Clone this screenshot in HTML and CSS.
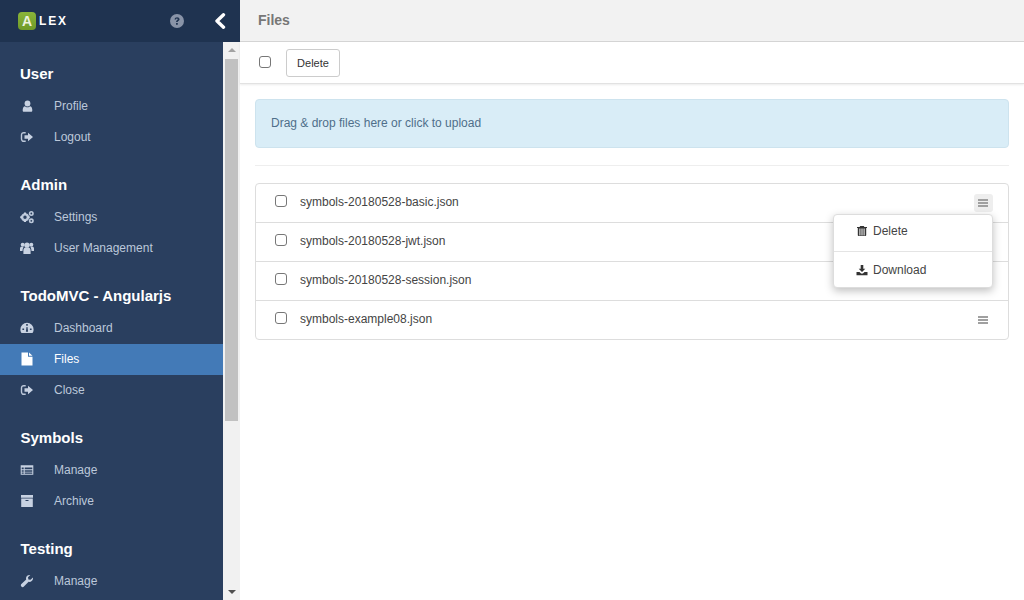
FILE: index.html
```html
<!DOCTYPE html>
<html lang="en">
<head>
<meta charset="utf-8">
<title>ALEX - Files</title>
<link rel="stylesheet" href="styles.css">
</head>
<body>
<div class="app">
  <aside class="sidebar">
    <header class="brand">
      <div class="logo"><span class="logo-a">A</span><span class="logo-rest">LEX</span></div>
      <svg class="help" viewBox="0 0 16 16"><circle cx="8" cy="8" r="8" fill="currentColor"/><path d="M5.200 6.200c.2-1.600 1.400-2.500 2.900-2.500 1.600 0 2.800 1 2.800 2.300 0 1.100-.7 1.600-1.400 2.100-.5.300-.7.600-.7 1.100H6.900c0-1 .3-1.600 1-2.100.6-.4.900-.6.900-1.100 0-.5-.4-.8-.9-.8-.6 0-1 .4-1.100 1zM6.900 10.200h2V12.300h-2z" fill="#1f3350"/></svg>
      <svg class="collapse" viewBox="0 0 12 16"><path d="M9.500 1.800 3 8l6.500 6.200" fill="none" stroke="currentColor" stroke-width="3.400" stroke-linecap="round" stroke-linejoin="round"/></svg>
    </header>
    <div class="side-body">
      <nav class="menu">
        <h2 class="menu-title">User</h2>
        <a class="menu-item"><svg class="ico" viewBox="0 0 14 14"><circle cx="7.500" cy="4.500" r="2.900"/><path d="M4 12.800c-.9 0-1.300-.5-1.300-1.300 0-2 .5-4.200 2.100-4.300.6.500 1.500 1 2.700 1s2.100-.5 2.700-1c1.600.1 2.100 2.300 2.100 4.300 0 .8-.4 1.300-1.300 1.300z"/></svg>Profile</a>
        <a class="menu-item"><svg class="ico" viewBox="0 0 14 14"><path d="M5.700 2.700H3.700A2.200 2.200 0 0 0 1.500 4.900v4.200a2.200 2.200 0 0 0 2.200 2.200h2" fill="none" stroke="currentColor" stroke-width="1.400"/><path d="M8 2.800 13 7l-5 4.200V8.800H4.500V5.200H8z"/></svg>Logout</a>

        <h2 class="menu-title">Admin</h2>
        <a class="menu-item"><svg class="ico" viewBox="0 0 14 14"><circle cx="5" cy="7.300" r="2.900" fill="none" stroke="currentColor" stroke-width="2.400"/><path d="M4 2.500h2v2H4zM4 10.100h2v2H4zM.2 6.300h2v2h-2zM7.800 6.300h2v2h-2z"/><circle cx="11.300" cy="3.500" r="1.700" fill="none" stroke="currentColor" stroke-width="1.600"/><circle cx="11.300" cy="10.800" r="1.700" fill="none" stroke="currentColor" stroke-width="1.600"/></svg>Settings</a>
        <a class="menu-item"><svg class="ico" viewBox="0 0 14 14"><circle cx="7" cy="4.200" r="2.600"/><circle cx="2.700" cy="3.700" r="2"/><circle cx="11.300" cy="3.700" r="2"/><path d="M3.400 13V9.200c0-1.800 1.200-2.800 2-2.800h3.200c.8 0 2 1 2 2.800V13zM0 10V7.400c0-1 .8-1.600 1.300-1.600h2.100c.4.500-.9 1.700-.9 4.200zM14 10V7.400c0-1-.8-1.600-1.300-1.600h-2.100c-.4.500.9 1.700.9 4.200z"/></svg>User Management</a>

        <h2 class="menu-title">TodoMVC - Angularjs</h2>
        <a class="menu-item"><svg class="ico" viewBox="0 0 14 14"><path fill-rule="evenodd" d="M7 1.800a6.600 6.600 0 0 0-6.600 6.600c0 1.500.4 2.600 1.100 3.600h11c.7-1 1.100-2.100 1.100-3.600A6.600 6.600 0 0 0 7 1.800zM6.200 3h1.600v1.700H6.200zM2.400 7.500h1.700v1.600H2.400zM9.900 7.500h1.700v1.600H9.900zM5.900 10.800l.6-4.700h1l.6 4.700z"/></svg>Dashboard</a>
        <a class="menu-item active"><svg class="ico" viewBox="0 0 14 14"><path d="M1.500.5H8v4.300h4.500v8.700h-11zM9 .5l3.500 3.300H9z"/></svg>Files</a>
        <a class="menu-item"><svg class="ico" viewBox="0 0 14 14"><path d="M5.700 2.700H3.700A2.200 2.200 0 0 0 1.500 4.900v4.200a2.200 2.200 0 0 0 2.200 2.200h2" fill="none" stroke="currentColor" stroke-width="1.400"/><path d="M8 2.800 13 7l-5 4.200V8.800H4.500V5.200H8z"/></svg>Close</a>

        <h2 class="menu-title">Symbols</h2>
        <a class="menu-item"><svg class="ico" viewBox="0 0 14 14"><path fill-rule="evenodd" d="M.7 2.300h12.600v9.400H.7zM1.700 4.500v1.700h2V4.500zM4.700 4.500v1.700h7.600V4.500zM1.700 7.200v1.600h2V7.200zM4.700 7.200v1.600h7.600V7.200zM1.700 9.500v1.200h2V9.500zM4.700 9.500v1.200h7.600V9.500z"/></svg>Manage</a>
        <a class="menu-item"><svg class="ico" viewBox="0 0 14 14"><path fill-rule="evenodd" d="M1 1h12v2.700H1zM1.200 4.500H12.800v8.500H1.200zM5.500 6v1h3V6z"/></svg>Archive</a>

        <h2 class="menu-title">Testing</h2>
        <a class="menu-item"><svg class="ico" viewBox="0 0 14 14"><path d="M13 3.600c.4 2-.9 4-3 4.300-.5.100-1 0-1.400-.1L3.900 12.600c-.7.700-1.800.7-2.500 0-.7-.7-.7-1.800 0-2.500l4.800-4.700C6 4.900 5.900 4.400 6 3.900 6.300 1.800 8.300.5 10.300 1L8 3.300l.4 2.100 2.100.4z"/></svg>Manage</a>
      </nav>
      <div class="scrollbar">
        <span class="sb-up"></span>
        <span class="sb-thumb"></span>
        <span class="sb-down"></span>
      </div>
    </div>
  </aside>

  <main class="content">
    <div class="page-title">Files</div>
    <div class="toolbar">
      <input class="check" type="checkbox" aria-label="Select all">
      <button class="btn" type="button">Delete</button>
    </div>
    <section class="body">
      <div class="dropzone">Drag &amp; drop files here or click to upload</div>
      <hr class="rule">
      <ul class="files">
        <li class="file"><input class="check" type="checkbox"><span class="file-name">symbols-20180528-basic.json</span><span class="bars open"><i></i><i></i><i></i></span>
          <div class="dropdown">
            <a class="dd-item"><svg class="dd-ico" viewBox="0 0 12 12"><path fill-rule="evenodd" d="M4.200 1h3.600l.6 1H11v1h-.8v7.200c0 .5-.4.800-.8.800H2.600c-.4 0-.8-.3-.8-.8V3H1V2h2.600zM3.400 3.500V10.500h1V3.500zM5.500 3.500V10.500h1V3.500zM7.600 3.500V10.500h1V3.500z"/></svg>Delete</a>
            <a class="dd-item"><svg class="dd-ico" viewBox="0 0 12 12"><path d="M4.700 1h2.600v3.700h2L6 8 2.700 4.700h2zM.5 8h3l1.300 1.200c.7.600 1.700.6 2.400 0L8.500 8h3v3.200H.5z"/></svg>Download</a>
          </div>
        </li>
        <li class="file"><input class="check" type="checkbox"><span class="file-name">symbols-20180528-jwt.json</span></li>
        <li class="file"><input class="check" type="checkbox"><span class="file-name">symbols-20180528-session.json</span></li>
        <li class="file"><input class="check" type="checkbox"><span class="file-name">symbols-example08.json</span><span class="bars"><i></i><i></i><i></i></span></li>
      </ul>
    </section>
  </main>
</div>
</body>
</html>
```
FILE: styles.css
```css
* { box-sizing: border-box; }
html, body { height: 100%; }
body {
  margin: 0;
  overflow: hidden;
  font-family: "Liberation Sans", Arial, sans-serif;
  font-size: 12px;
  color: #333;
  background: #fff;
}
.app { display: flex; height: 600px; }

/* sidebar */
.sidebar { width: 240px; flex: none; display: flex; flex-direction: column; background: #2a3f5f; }
.brand {
  height: 42px;
  flex: none;
  display: flex;
  align-items: center;
  padding-left: 18px;
  background: #1f3350;
}
.logo { display: flex; align-items: center; width: 152px; }
.logo-a {
  width: 18px;
  height: 18px;
  border-radius: 4px;
  background: linear-gradient(#8ab53a, #6f9a28);
  color: #edf3dd;
  font-weight: 700;
  font-size: 14px;
  line-height: 18px;
  text-align: center;
}
.logo-rest { margin-left: 3px; color: #fff; font-weight: 700; font-size: 12px; letter-spacing: 1.8px; }
.help { width: 14px; height: 14px; color: #8994a8; margin-right: 30px; flex: none; }
.collapse { width: 12px; height: 16px; color: #fff; flex: none; }

.side-body { flex: 1; min-height: 0; display: flex; }
.menu { width: 223px; flex: none; overflow: hidden; }
.menu-title {
  margin: 0;
  height: 49px;
  padding: 23px 0 0 20.500px;
  font-size: 15px;
  line-height: 18px;
  font-weight: 700;
  color: #fff;
}
.menu-title:first-child { padding-left: 20px; }
.menu-item {
  display: flex;
  align-items: center;
  height: 31px;
  padding: 0 0 1px 20px;
  color: #bcc8da;
  font-size: 12px;
}
.menu-item.active { background: #437ab7; color: #fff; }
.ico { width: 14px; height: 14px; margin-right: 20px; fill: #c8d2e2; flex: none; }
.menu-item.active .ico { fill: #fff; }

.scrollbar { width: 17px; flex: none; display: flex; flex-direction: column; align-items: center; background: #f1f1f1; }
.sb-up, .sb-down { width: 0; height: 0; border-left: 4px solid transparent; border-right: 4px solid transparent; flex: none; }
.sb-up { margin-top: 6px; border-bottom: 4px solid #a3a3a3; }
.sb-thumb { width: 13px; height: 362px; margin-top: 7px; background: #c1c1c1; flex: none; }
.sb-down { margin-top: auto; margin-bottom: 6px; border-top: 4px solid #505050; }

/* content */
.content { flex: 1; min-width: 0; display: flex; flex-direction: column; }
.page-title {
  height: 42px;
  flex: none;
  padding-left: 18px;
  line-height: 40px;
  font-size: 14px;
  font-weight: 700;
  color: #777;
  background: #f2f2f2;
  border-bottom: 1px solid #d5d5d5;
}
.toolbar {
  height: 42px;
  flex: none;
  display: flex;
  align-items: flex-start;
  padding: 7px 0 0 19px;
  border-bottom: 1px solid #e2e2e2;
  box-shadow: 0 1px 2px rgba(0,0,0,.08);
}
.check {
  appearance: none;
  width: 12px;
  height: 12px;
  margin: 0;
  flex: none;
  background: #fff;
  border: 1px solid #777;
  border-radius: 3px;
}
.toolbar .check { margin-top: 7px; }
.btn {
  margin-left: 15px;
  width: 54px;
  height: 28px;
  padding: 0;
  border: 1px solid #ccc;
  border-radius: 3px;
  background: #fff;
  font: 11px "Liberation Sans", Arial, sans-serif;
  color: #333;
}
.body { flex: 1; padding: 15px 15px 0; }
.dropzone {
  height: 49px;
  padding-left: 15px;
  line-height: 47px;
  font-size: 12px;
  color: #4f6f8a;
  background: #d9edf7;
  border: 1px solid #cde3ee;
  border-radius: 4px;
}
.rule { margin: 17px 0; height: 1px; border: 0; background: #eee; }
.files { margin: 0; padding: 0; list-style: none; border: 1px solid #ddd; border-radius: 4px; }
.file {
  position: relative;
  display: flex;
  align-items: center;
  height: 39px;
  padding: 0 15px 0 19px;
  border-bottom: 1px solid #ddd;
}
.file:last-child { height: 38px; border-bottom: 0; }
.file .check { margin-bottom: 4px; }
.file-name { flex: 1; margin-left: 13px; color: #444; padding-bottom: 3px; }
.bars {
  display: flex;
  flex-direction: column;
  justify-content: center;
  gap: 1px;
  width: 19px;
  height: 18px;
  padding: 0 5px 0 4px;
  border-radius: 3px;
}
.bars.open { background: #eee; }
.bars i { display: block; height: 2px; background: #a0a0a0; }

.dropdown {
  position: absolute;
  z-index: 2;
  top: 30px;
  right: 15px;
  width: 160px;
  height: 74px;
  background: #fff;
  border: 1px solid #ddd;
  border-radius: 4px;
  box-shadow: 0 3px 8px rgba(0,0,0,.25);
}
.dd-item {
  display: flex;
  align-items: center;
  height: 36px;
  padding: 0 0 4px 22px;
  color: #444;
  font-size: 12px;
}
.dd-item + .dd-item { border-top: 1px solid #e4e4e4; padding-bottom: 0; }
.dd-ico { width: 12px; height: 12px; margin-right: 5px; fill: #333; flex: none; }
```
